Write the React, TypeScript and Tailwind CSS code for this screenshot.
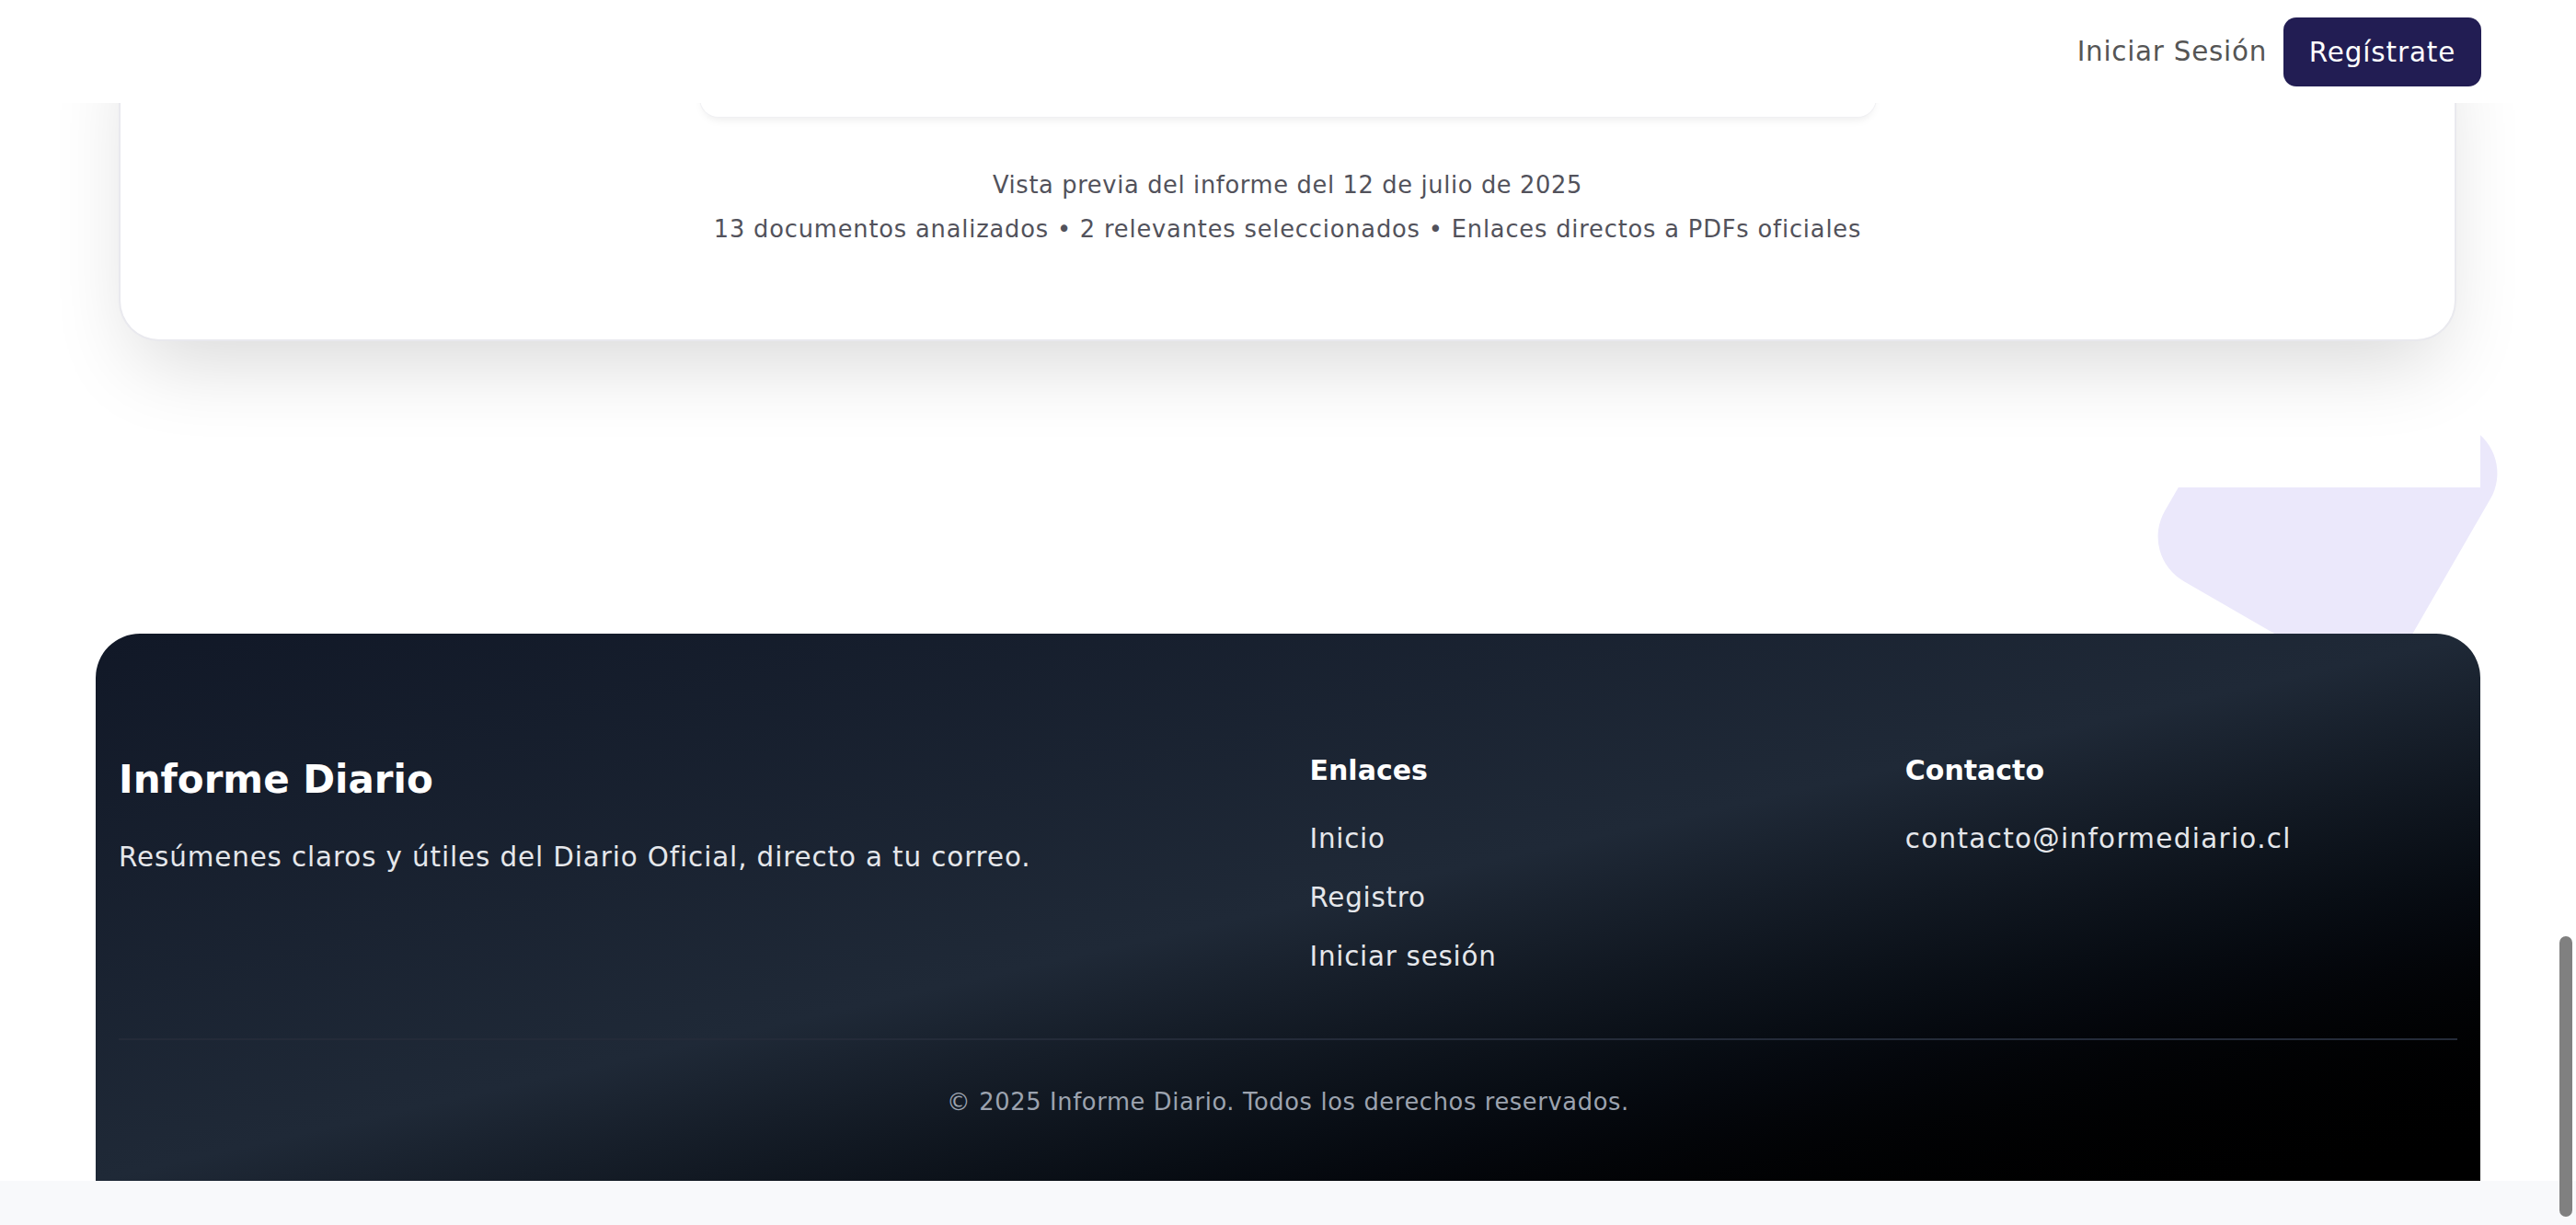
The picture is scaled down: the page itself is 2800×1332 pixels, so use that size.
import React from "react";

export default function App() {
  return (
    <div className="relative h-[1332px] w-full overflow-hidden bg-[#f8f9fb] font-['DejaVu_Sans',sans-serif]">
      {/* Fixed header */}
      <header className="fixed inset-x-0 top-0 z-30 flex h-[112px] items-center justify-end gap-[18px] bg-white pr-[103px]">
        <a className="text-[29.4px] leading-[42px] tracking-[0.025em] text-[#555555]">Iniciar Sesión</a>
        <button className="flex h-[75px] w-[215px] items-center justify-center rounded-[14px] bg-[#221d53] pt-[2px] text-[29.4px] tracking-[0.03em] text-white">
          Regístrate
        </button>
      </header>

      <div className="relative h-[1284px] bg-white">
        {/* decorative shape */}
        <div className="absolute left-[2380px] top-[399px] h-[300px] w-[300px] rotate-[30deg] rounded-[56px] bg-[#ebe8fb]" />

        {/* Preview section */}
        <section className="relative z-10 mr-[104px] h-[530px] bg-white pl-[129px] pr-[26px]">
          <div className="rounded-b-[44px] border-2 border-t-0 border-[#e9e9ee] bg-white pb-[102px] shadow-[0_40px_90px_-20px_rgba(0,0,0,0.16)]">
            <div className="mx-auto h-[128px] w-[1280px] rounded-b-[21px] border border-t-0 border-[#f0f0f3] bg-white shadow-[0_6px_10px_-4px_rgba(0,0,0,0.08)]" />
            <div className="mt-[56px] text-center text-[25.7px] leading-[35px] text-[#52525b]">
              <p className="tracking-[0.025em]">Vista previa del informe del 12 de julio de 2025</p>
              <p className="mt-[13px] tracking-[0.032em]">
                13 documentos analizados • 2 relevantes seleccionados • Enlaces directos a PDFs oficiales
              </p>
            </div>
          </div>
        </section>

        <div className="h-[159px]" />

        {/* Footer */}
        <footer className="relative z-10 mx-[104px] h-[595px] rounded-t-[48px] bg-linear-to-br from-[#111827] via-[#1f2937] to-black px-[25px] pt-[124px]">
          <div className="grid grid-cols-4 gap-x-[47px]">
            <div className="col-span-2">
              <h2 className="mt-[7px] text-[42px] font-bold leading-[56px] text-white">Informe Diario</h2>
              <p className="mt-[35px] text-[29.4px] leading-[42px] tracking-[0.03em] text-[#e5e7eb]">
                Resúmenes claros y útiles del Diario Oficial, directo a tu correo.
              </p>
            </div>
            <div>
              <h3 className="text-[30px] font-bold leading-[49px] text-white">Enlaces</h3>
              <ul className="mt-[29px] flex flex-col gap-[22px] text-[29.4px] leading-[42px] tracking-[0.025em] text-[#e5e7eb]">
                <li>Inicio</li>
                <li>Registro</li>
                <li>Iniciar sesión</li>
              </ul>
            </div>
            <div>
              <h3 className="text-[30px] font-bold leading-[49px] text-white">Contacto</h3>
              <ul className="mt-[29px] flex flex-col gap-[22px] text-[29.4px] leading-[42px] tracking-[0.045em] text-[#e5e7eb]">
                <li>contacto@informediario.cl</li>
              </ul>
            </div>
          </div>
          <div className="mt-[68px] border-t-2 border-[#242b39] pt-[50px] text-center text-[25.7px] leading-[35px] tracking-[0.025em] text-[#9ca3af]">
            © 2025 Informe Diario. Todos los derechos reservados.
          </div>
        </footer>
      </div>

      {/* overlay scrollbar thumb */}
      <div className="absolute right-[4px] top-[1018px] z-40 h-[305px] w-[14px] rounded-full bg-[#808080]" />
    </div>
  );
}
